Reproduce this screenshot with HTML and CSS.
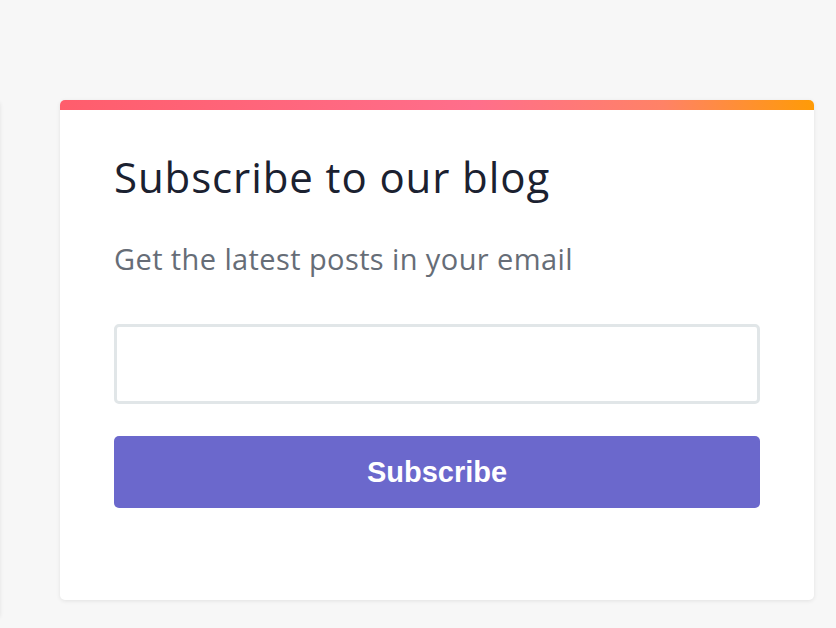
FILE: index.html
```html
<!DOCTYPE html>
<html lang="en">
<head>
  <meta charset="UTF-8" />
  <meta name="viewport" content="width=device-width, initial-scale=1.0">
  <title>Subscribe to our blog</title>
  <link rel="stylesheet" href="styles.css">
</head>
<body>
  <div class="row">
    <div class="card ghost"></div>

    <div class="card subscribe">
      <div class="card-bar"></div>
      <div class="card-body">
        <h2 class="title">Subscribe to our blog</h2>
        <p class="lead">Get the latest posts in your email</p>
        <form class="form" onsubmit="return false">
          <input type="email" class="email" aria-label="Email" />
          <button type="submit" class="btn">Subscribe</button>
        </form>
      </div>
    </div>
  </div>
</body>
</html>
```

FILE: styles.css
```css
html, body { margin: 0; height: 100%; }
body { background: #f7f7f7; font-family: "Open Sans", Arial, sans-serif; overflow: hidden; }

.row { display: flex; align-items: flex-start; gap: 60px; padding-top: 100px; margin-left: -600px; }

.card { background: #fff; border-radius: 5px; box-shadow: 0 1px 4px rgba(0, 0, 0, 0.09); overflow: hidden; }
.ghost { width: 600px; height: 518px; flex-shrink: 0; }
.subscribe { width: 754px; flex-shrink: 0; }

.card-bar { height: 10px; background: linear-gradient(to right, #ff5d6c, #ff6e8b 55%, #ff8266 80%, #ff9b06); }
.card-body { padding: 44px 54px 92px; }

.title { margin: 0; font-size: 42px; font-weight: 400; letter-spacing: 0.9px; color: #1b2130; line-height: 46px; }
.lead { margin: 41px 0 0; font-size: 29px; letter-spacing: 0.4px; color: #666d77; line-height: 36px; }

.form { margin-top: 47px; display: flex; flex-direction: column; gap: 32px; }
.email { height: 80px; box-sizing: border-box; border: 3px solid #e1e6e8; border-radius: 5px; padding: 0 20px; font-size: 24px; outline: none; }
.btn { height: 72px; border: none; border-radius: 5px; background: #6b68cc; color: #fff; font-family: "Liberation Sans", Arial, sans-serif; font-weight: 700; font-size: 29px; cursor: pointer; }
```
